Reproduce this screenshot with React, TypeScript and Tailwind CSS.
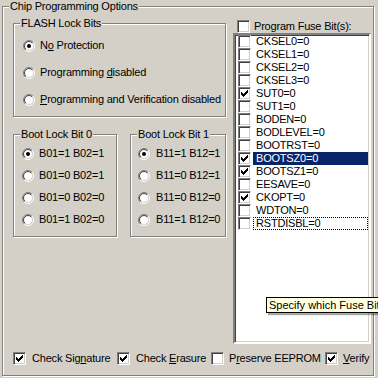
import { useId, type ReactNode } from "react";

const fuses: { name: string; on: boolean }[] = [
  { name: "CKSEL0=0", on: false },
  { name: "CKSEL1=0", on: false },
  { name: "CKSEL2=0", on: false },
  { name: "CKSEL3=0", on: false },
  { name: "SUT0=0", on: true },
  { name: "SUT1=0", on: false },
  { name: "BODEN=0", on: false },
  { name: "BODLEVEL=0", on: false },
  { name: "BOOTRST=0", on: false },
  { name: "BOOTSZ0=0", on: true },
  { name: "BOOTSZ1=0", on: true },
  { name: "EESAVE=0", on: false },
  { name: "CKOPT=0", on: true },
  { name: "WDTON=0", on: false },
  { name: "RSTDISBL=0", on: false },
];

function Check({ on }: { on: boolean }) {
  return (
    <span className="flex h-[13px] w-[13px] shrink-0 items-start justify-start border border-t-[#808080] border-l-[#808080] border-r-white border-b-white bg-white shadow-[inset_1px_1px_0_#404040,inset_-1px_-1px_0_#d4d0c8]">
      {on && (
        <svg width="7" height="7" viewBox="0 0 7 7" className="ml-[2px] mt-[2px]" shapeRendering="crispEdges">
          <path
            d="M6 0h1v1h-1z M5 1h2v1h-2z M0 2h1v1h-1z M4 2h3v1h-3z M0 3h2v1h-2z M3 3h3v1h-3z M0 4h5v1h-5z M1 5h3v1h-3z M2 6h1v1h-1z"
            fill="#000"
          />
        </svg>
      )}
    </span>
  );
}

function Radio({ on }: { on: boolean }) {
  const id = useId().replace(/:/g, "");
  return (
    <svg width="12" height="12" viewBox="0 0 12 12" className="shrink-0">
      <defs>
        <linearGradient id={`o${id}`} x1="0" y1="0" x2="1" y2="1">
          <stop offset="0.5" stopColor="#808080" />
          <stop offset="0.5" stopColor="#ffffff" />
        </linearGradient>
        <linearGradient id={`i${id}`} x1="0" y1="0" x2="1" y2="1">
          <stop offset="0.5" stopColor="#404040" />
          <stop offset="0.5" stopColor="#d4d0c8" />
        </linearGradient>
      </defs>
      <circle cx="6" cy="6" r="5.5" fill="none" stroke={`url(#o${id})`} />
      <circle cx="6" cy="6" r="4.5" fill="#fff" stroke={`url(#i${id})`} />
      {on && <circle cx="6" cy="6" r="2" fill="#000" />}
    </svg>
  );
}

function Group({ label, className, children }: { label: string; className: string; children: ReactNode }) {
  return (
    <div className={`relative border border-[#808080] shadow-[inset_1px_1px_0_#fff,1px_1px_0_#fff] ${className}`}>
      <span className="absolute left-[6px] top-[-7px] bg-[#d4d0c8] px-[1px] leading-[13px]">{label}</span>
      {children}
    </div>
  );
}

function RadioRow({ on, children, gap }: { on: boolean; children: ReactNode; gap: string }) {
  return (
    <div className={`flex h-[13px] items-center ${gap}`}>
      <Radio on={on} />
      <span className="whitespace-nowrap">{children}</span>
    </div>
  );
}

export default function App() {
  return (
    <div className="relative h-[378px] w-[378px] overflow-hidden bg-[#d4d0c8] pl-[2px] pt-[6px] font-['Liberation_Sans',Arial,sans-serif] text-[11px] leading-[13px] tracking-[-0.2px] text-black">
      <Group label="Chip Programming Options" className="flex h-[370px] w-[372px] flex-col">
        <div className="flex pl-[10px] pt-[13px]">
          <div className="mt-[3px] flex w-[213px] flex-col">
            <Group label="FLASH Lock Bits" className="h-[94px] w-[213px]">
              <div className="flex flex-col gap-[14px] pl-[9px] pt-[15px]">
                <RadioRow on gap="gap-[5px]">
                  N<u className="underline-offset-1">o</u> Protection
                </RadioRow>
                <RadioRow on={false} gap="gap-[5px]">
                  Programming <u className="underline-offset-1">d</u>isabled
                </RadioRow>
                <RadioRow on={false} gap="gap-[5px]">
                  <u className="underline-offset-1">P</u>rogramming and Verification disabled
                </RadioRow>
              </div>
            </Group>
            <div className="mt-[17px] flex">
              <Group label="Boot Lock Bit 0" className="h-[103px] w-[104px]">
                <div className="flex flex-col gap-[9px] pl-[8px] pt-[12px]">
                  <RadioRow on gap="gap-[5px]">B01=1 B02=1</RadioRow>
                  <RadioRow on={false} gap="gap-[5px]">B01=0 B02=1</RadioRow>
                  <RadioRow on={false} gap="gap-[5px]">B01=0 B02=0</RadioRow>
                  <RadioRow on={false} gap="gap-[5px]">B01=1 B02=0</RadioRow>
                </div>
              </Group>
              <Group label="Boot Lock Bit 1" className="ml-[13px] h-[103px] w-[96px]">
                <div className="flex flex-col gap-[9px] pl-[7px] pt-[12px]">
                  <RadioRow on gap="gap-[6px]">B11=1 B12=1</RadioRow>
                  <RadioRow on={false} gap="gap-[6px]">B11=0 B12=1</RadioRow>
                  <RadioRow on={false} gap="gap-[6px]">B11=0 B12=0</RadioRow>
                  <RadioRow on={false} gap="gap-[6px]">B11=1 B12=0</RadioRow>
                </div>
              </Group>
            </div>
          </div>

          <div className="ml-[7px] flex flex-col">
            <div className="flex h-[13px] items-center gap-[4px] pl-[4px]">
              <Check on={false} />
              <span className="whitespace-nowrap">Program Fuse Bit(s):</span>
            </div>
            <div className="h-[311px] w-[138px] border-2 border-t-[#808080] border-l-[#808080] border-r-white border-b-white bg-white shadow-[inset_1px_1px_0_#404040,inset_-1px_-1px_0_#d4d0c8]">
              <div className="flex flex-col pl-[3px] pr-[1px]">
                {fuses.map((f) => (
                  <div key={f.name} className="flex h-[13px] items-center">
                    <Check on={f.on} />
                    <span
                      className={`ml-[2px] flex h-[13px] flex-1 items-center pl-[3px] ${
                        f.name === "BOOTSZ0=0" ? "bg-[#0a246a] text-white" : ""
                      } ${f.name === "RSTDISBL=0" ? "outline-1 -outline-offset-1 outline-dotted outline-black" : ""}`}
                    >
                      {f.name}
                    </span>
                  </div>
                ))}
              </div>
            </div>
          </div>
        </div>

        <div className="mt-[8px] flex h-[13px] pl-[10px]">
          <div className="flex w-[104px] items-center gap-[6px]">
            <Check on />
            <span className="whitespace-nowrap">
              Check Sig<u className="underline-offset-1">n</u>ature
            </span>
          </div>
          <div className="flex w-[94px] items-center gap-[6px]">
            <Check on />
            <span className="whitespace-nowrap">
              Check <u className="underline-offset-1">E</u>rasure
            </span>
          </div>
          <div className="flex w-[114px] items-center gap-[5px]">
            <Check on={false} />
            <span className="whitespace-nowrap">
              P<u className="underline-offset-1">r</u>eserve EEPROM
            </span>
          </div>
          <div className="flex items-center gap-[5px]">
            <Check on />
            <span className="whitespace-nowrap">
              <u className="underline-offset-1">V</u>erify
            </span>
          </div>
        </div>
      </Group>

      <div className="absolute left-[266px] top-[297px] flex h-[16px] items-center whitespace-nowrap border border-black bg-[#ffffe1] px-[2px] tracking-normal shadow-[2px_2px_1px_rgba(0,0,0,0.35)]">
        Specify which Fuse Bit(s) to program
      </div>
    </div>
  );
}
